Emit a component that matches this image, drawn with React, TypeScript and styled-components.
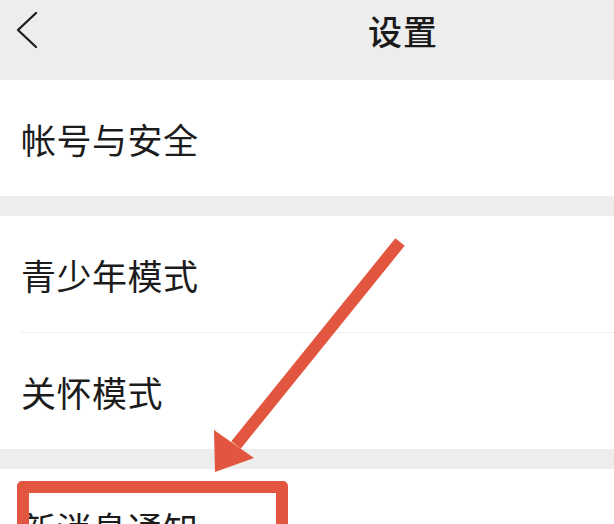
import styled, { createGlobalStyle } from "styled-components";

const GlobalStyle = createGlobalStyle`
  html, body {
    margin: 0;
    padding: 0;
    background: #ffffff;
    overflow: hidden;
  }
  body {
    font-family: "Noto Sans CJK SC", "Noto Sans", sans-serif;
  }
`;

const SPage = styled.div`
  position: relative;
  width: 614px;
  height: 524px;
  overflow: hidden;
  background: #ffffff;
`;

const SHeader = styled.header`
  height: 80px;
  box-sizing: border-box;
  padding: 0 0 20px 14px;
  background: #ededed;
  display: flex;
  align-items: center;
`;

const SBack = styled.button`
  border: none;
  background: none;
  padding: 0;
  width: 26px;
  height: 40px;
  display: flex;
  align-items: center;
  justify-content: center;
  color: #1d1d1d;
`;

const STitle = styled.h1`
  margin: 0 176px 0 auto;
  font-size: 34px;
  font-weight: 500;
  color: #1a1a1a;
  letter-spacing: 1px;
`;

const SGroup = styled.section`
  background: #ffffff;

  & + & {
    border-top: 20px solid #ededed;
  }
`;

const SRow = styled.div<{ $divider?: boolean }>`
  position: relative;
  height: ${(p) => (p.$divider ? "117px" : "116px")};
  display: flex;
  align-items: center;
  padding-left: 21px;
  font-size: 35px;
  color: #1c1c1c;
  letter-spacing: 0.5px;

  ${(p) =>
    p.$divider &&
    `
    &::after {
      content: "";
      position: absolute;
      left: 20px;
      right: 0;
      bottom: 0;
      height: 1px;
      background: #f1f1f1;
    }
  `}
`;

const SHighlight = styled.div`
  position: absolute;
  left: 17px;
  top: 12px;
  width: 271px;
  height: 140px;
  box-sizing: border-box;
  border: 12px solid #e2553e;
  border-radius: 5px;
  pointer-events: none;
`;

const SArrow = styled.svg`
  position: absolute;
  left: 0;
  top: 0;
  pointer-events: none;
`;

const Chevron = () => (
  <svg width="24" height="38" viewBox="0 0 24 38" fill="none">
    <path
      d="M21 2 L3 19 L21 36"
      stroke="currentColor"
      strokeWidth="2.3"
      strokeLinecap="round"
      strokeLinejoin="round"
    />
  </svg>
);

const App = () => {
  return (
    <SPage>
      <GlobalStyle />
      <SHeader>
        <SBack aria-label="返回">
          <Chevron />
        </SBack>
        <STitle>设置</STitle>
      </SHeader>

      <SGroup>
        <SRow>帐号与安全</SRow>
      </SGroup>

      <SGroup>
        <SRow $divider>青少年模式</SRow>
        <SRow>关怀模式</SRow>
      </SGroup>

      <SGroup>
        <SRow>
          新消息通知
          <SHighlight />
        </SRow>
      </SGroup>

      <SArrow width="614" height="524" viewBox="0 0 614 524">
        <line
          x1="400"
          y1="242"
          x2="236"
          y2="445"
          stroke="#e2553e"
          strokeWidth="12"
        />
        <polygon points="215,472 214,430 254,458" fill="#e2553e" />
      </SArrow>
    </SPage>
  );
};

export default App;
